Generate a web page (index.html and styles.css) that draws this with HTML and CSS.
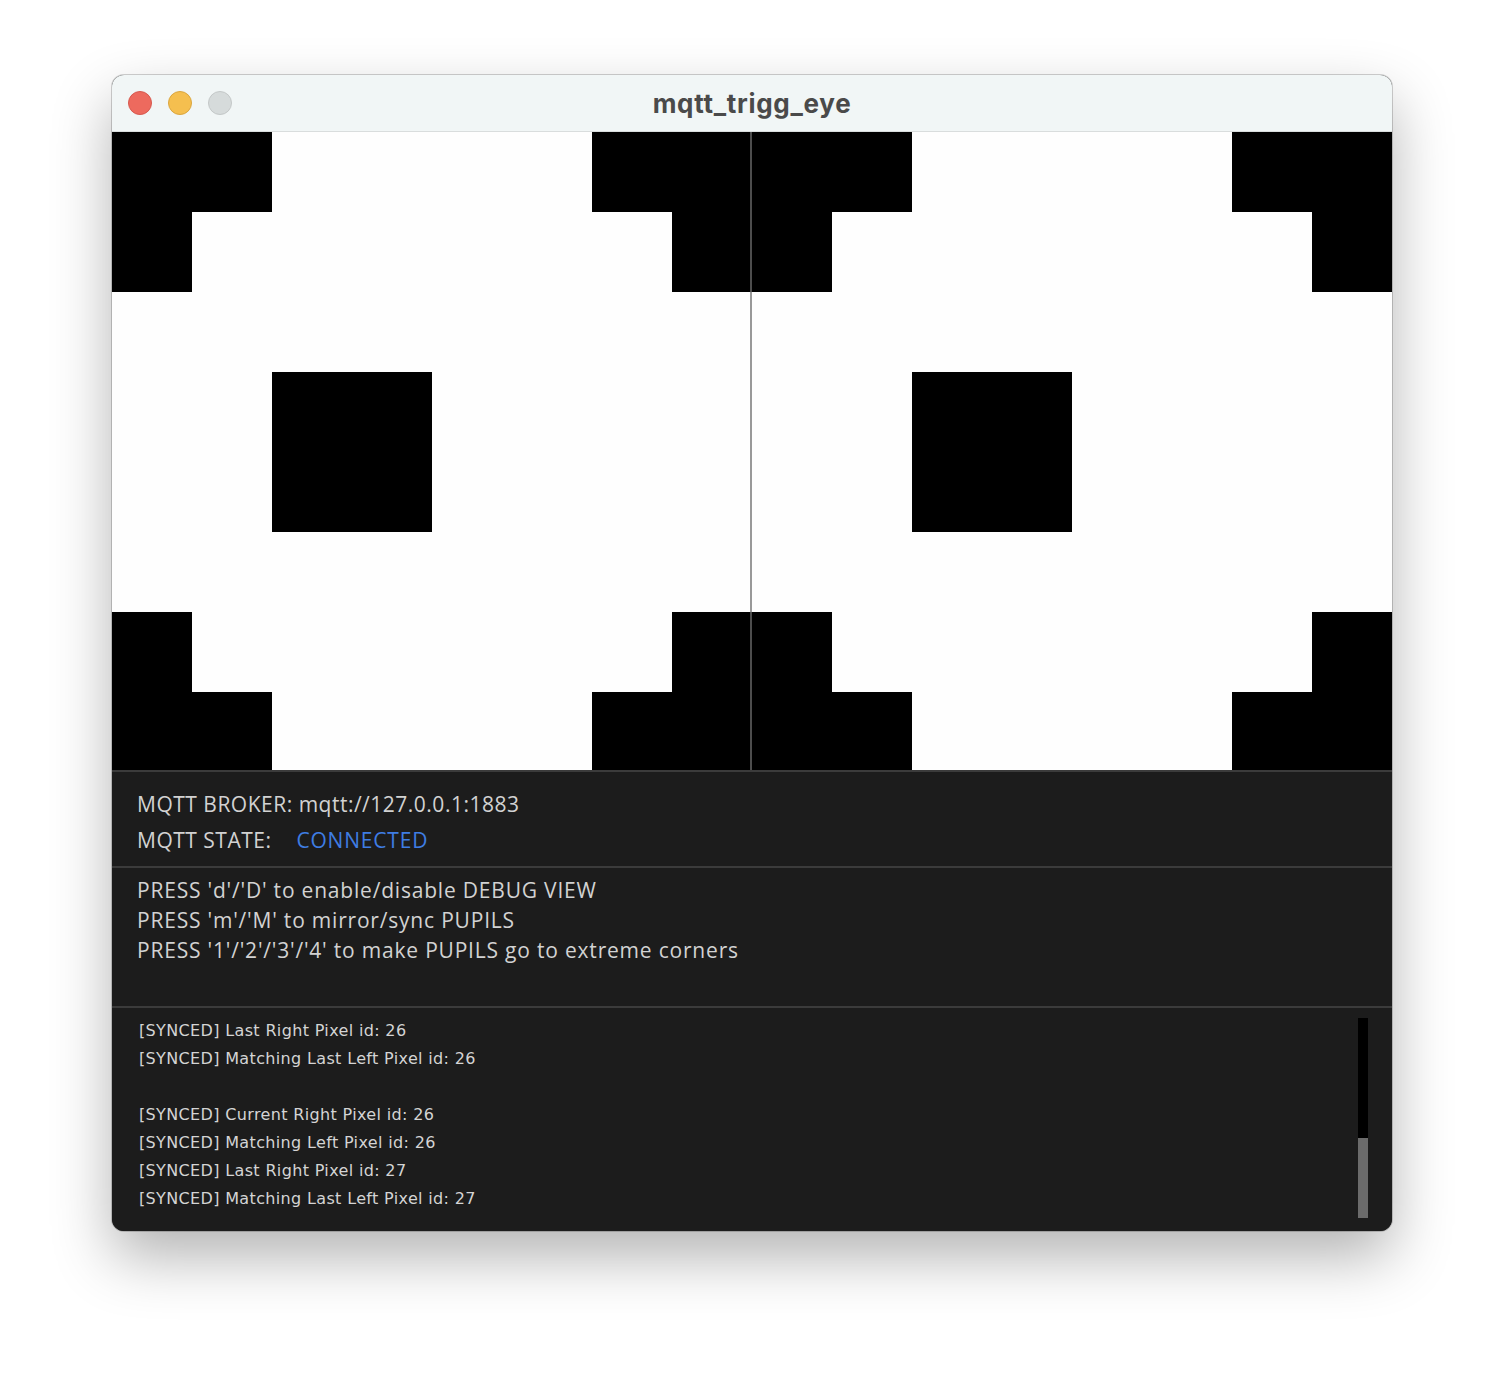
FILE: index.html
```html
<!DOCTYPE html>
<html lang="en">
<head>
<meta charset="utf-8">
<title>mqtt_trigg_eye</title>
<link rel="stylesheet" href="styles.css">
</head>
<body>
<div class="window">
  <div class="titlebar">
    <div class="lights">
      <span class="light red"></span>
      <span class="light yellow"></span>
      <span class="light gray"></span>
    </div>
    <div class="title">mqtt_trigg_eye</div>
  </div>
  <div class="canvas">
    <div class="eye">
      <div class="blk tl1"></div><div class="blk tl2"></div>
      <div class="blk tr1"></div><div class="blk tr2"></div>
      <div class="blk bl1"></div><div class="blk bl2"></div>
      <div class="blk br1"></div><div class="blk br2"></div>
      <div class="blk pupil"></div>
    </div>
    <div class="eye">
      <div class="blk tl1"></div><div class="blk tl2"></div>
      <div class="blk tr1"></div><div class="blk tr2"></div>
      <div class="blk bl1"></div><div class="blk bl2"></div>
      <div class="blk br1"></div><div class="blk br2"></div>
      <div class="blk pupil"></div>
    </div>
    <div class="divider"></div>
  </div>
  <div class="panel">
    <div class="section status">
      <div class="line">MQTT BROKER: mqtt://127.0.0.1:1883</div>
      <div class="line">MQTT STATE: <span class="connected">CONNECTED</span></div>
    </div>
    <div class="section help">
      <div class="line">PRESS 'd'/'D' to enable/disable DEBUG VIEW</div>
      <div class="line">PRESS 'm'/'M' to mirror/sync PUPILS</div>
      <div class="line">PRESS '1'/'2'/'3'/'4' to make PUPILS go to extreme corners</div>
    </div>
    <div class="section log">
      <div class="line">[SYNCED] Last Right Pixel id: 26</div>
      <div class="line">[SYNCED] Matching Last Left Pixel id: 26</div>
      <div class="line">&nbsp;</div>
      <div class="line">[SYNCED] Current Right Pixel id: 26</div>
      <div class="line">[SYNCED] Matching Left Pixel id: 26</div>
      <div class="line">[SYNCED] Last Right Pixel id: 27</div>
      <div class="line">[SYNCED] Matching Last Left Pixel id: 27</div>
      <div class="scrollbar"><div class="thumb"></div></div>
    </div>
  </div>
</div>
</body>
</html>
```
FILE: styles.css
```css
html, body {
  margin: 0;
  padding: 0;
  background: #ffffff;
}

body {
  width: 1504px;
  height: 1380px;
  overflow: hidden;
}

.window {
  margin: 75px 0 0 112px;
  width: 1280px;
  height: 1156px;
  border-radius: 12px;
  overflow: hidden;
  box-shadow: 0 0 0 1px rgba(0, 0, 0, 0.18), 0 26px 60px rgba(0, 0, 0, 0.3);
  display: flex;
  flex-direction: column;
  background: #1c1c1c;
}

.titlebar {
  height: 56px;
  flex: none;
  background: #f1f6f6;
  border-bottom: 1px solid #d9dddd;
  display: flex;
  align-items: center;
  justify-content: center;
  position: relative;
}

.lights {
  position: absolute;
  left: 16px;
  top: 16px;
  display: flex;
  gap: 16px;
}

.light {
  width: 22px;
  height: 22px;
  border-radius: 50%;
  display: block;
  border: 1px solid rgba(0, 0, 0, 0.1);
}

.red { background: #ed6a5e; border-color: #d7594f; }
.yellow { background: #f5bf4f; border-color: #dba63f; }
.gray { background: #d6dbdb; border-color: #c4c8c8; }

.title {
  font-family: Inter, "Liberation Sans", sans-serif;
  font-weight: 700;
  font-size: 26px;
  color: #4a4a4a;
  letter-spacing: 0.7px;
  margin-top: 1px;
}

.canvas {
  height: 638px;
  flex: none;
  display: flex;
  position: relative;
  overflow: hidden;
  background: #fefefe;
}

.eye {
  width: 640px;
  height: 640px;
  display: grid;
  grid-template-columns: repeat(8, 80px);
  grid-template-rows: repeat(8, 80px);
  background: #fefefe;
}

.blk { background: #000; }
.tl1 { grid-column: 1 / 3; grid-row: 1; }
.tl2 { grid-column: 1; grid-row: 2; }
.tr1 { grid-column: 7 / 9; grid-row: 1; }
.tr2 { grid-column: 8; grid-row: 2; }
.bl1 { grid-column: 1; grid-row: 7; }
.bl2 { grid-column: 1 / 3; grid-row: 8; }
.br1 { grid-column: 8; grid-row: 7; }
.br2 { grid-column: 7 / 9; grid-row: 8; }
.pupil { grid-column: 3 / 5; grid-row: 4 / 6; }

.divider {
  position: absolute;
  left: 638px;
  top: 0;
  bottom: 0;
  width: 2px;
  background: rgba(110, 110, 110, 0.7);
}

.panel {
  flex: 1;
  display: flex;
  flex-direction: column;
  background: #1c1c1c;
  color: #d2d2d2;
}

.section {
  border-top: 2px solid #3b3b3b;
  padding-left: 25px;
}

.status {
  padding-top: 14px;
  padding-bottom: 8px;
  font-family: "Open Sans", "Noto Sans", sans-serif;
  font-size: 21px;
  line-height: 36px;
  letter-spacing: 0.5px;
}

.status .line {
  display: flex;
  align-items: baseline;
}

.connected {
  color: #3f7de3;
  margin-left: 25px;
  letter-spacing: 0.8px;
}

.help {
  padding-top: 7px;
  padding-bottom: 41px;
  font-family: "Open Sans", "Noto Sans", sans-serif;
  font-size: 21px;
  line-height: 30px;
  letter-spacing: 0.8px;
}

.log {
  position: relative;
  flex: 1;
  padding-top: 9px;
  padding-left: 27px;
  font-family: "DejaVu Sans", sans-serif;
  font-size: 16px;
  line-height: 28px;
  letter-spacing: 0.35px;
  color: #d4d4d4;
}

.scrollbar {
  position: absolute;
  right: 24px;
  top: 10px;
  width: 10px;
  height: 200px;
  background: #000;
  display: flex;
  flex-direction: column;
  justify-content: flex-end;
}

.thumb {
  height: 80px;
  background: #6b6b6b;
}
```
